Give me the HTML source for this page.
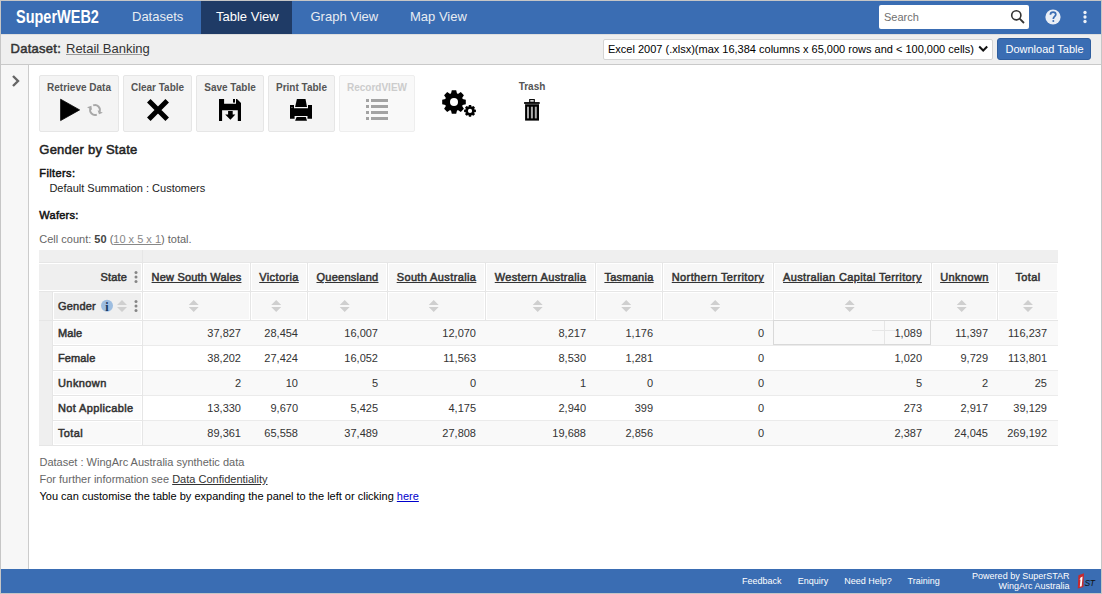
<!DOCTYPE html><html><head><meta charset="utf-8"><title>SuperWEB2 Table View</title><style>
html,body{margin:0;padding:0;background:#fff;}
body{width:1102px;height:594px;position:relative;overflow:hidden;font-family:"Liberation Sans",sans-serif;}
.t{position:absolute;white-space:nowrap;}
.b{position:absolute;}
svg{position:absolute;overflow:visible;}
u{text-decoration:underline;}
</style></head><body>
<div class="b" style="left:0px;top:0px;width:1102px;height:594px;background:#c6c6c6;"></div>
<div class="b" style="left:1px;top:1px;width:1100px;height:592px;background:#ffffff;"></div>
<div class="b" style="left:1px;top:1px;width:1100px;height:33px;background:#3a6db3;"></div>
<div class="t" style="left:16px;top:6px;font-size:18px;line-height:22px;font-weight:bold;color:#fff;transform:scaleX(0.805);transform-origin:0 0;">SuperWEB2</div>
<div class="b" style="left:201px;top:1px;width:91px;height:33px;background:#1f3b66;"></div>
<div class="t" style="left:132px;top:9.10px;font-size:13px;line-height:16px;color:#e8ecf2;">Datasets</div>
<div class="t" style="left:216px;top:9.10px;font-size:13px;line-height:16px;color:#ffffff;">Table View</div>
<div class="t" style="left:310.5px;top:9.10px;font-size:13px;line-height:16px;color:#e8ecf2;">Graph View</div>
<div class="t" style="left:410px;top:9.10px;font-size:13px;line-height:16px;color:#e8ecf2;">Map View</div>
<div class="b" style="left:879px;top:5px;width:150px;height:24px;background:#fff;border-radius:2px;"></div>
<div class="t" style="left:884px;top:10.19px;font-size:11px;line-height:14px;color:#707070;">Search</div>
<svg style="left:1010px;top:9px" width="16" height="16" viewBox="0 0 16 16"><circle cx="6.3" cy="6.3" r="4.6" fill="none" stroke="#333" stroke-width="1.6"/><line x1="9.6" y1="9.6" x2="14" y2="14" stroke="#333" stroke-width="1.8"/></svg>
<svg style="left:0;top:0" width="1102" height="40" viewBox="0 0 1102 40"><circle cx="1053" cy="17" r="7.6" fill="#e9eef6"/><path d="M1050.4,14.8 C1050.4,13.1 1051.5,12.2 1053.1,12.2 C1054.7,12.2 1055.8,13.2 1055.8,14.6 C1055.8,16.4 1053.3,16.6 1053.3,18.9" fill="none" stroke="#3a6db3" stroke-width="1.7"/><circle cx="1053.3" cy="21" r="1" fill="#3a6db3"/><circle cx="1085" cy="12.5" r="1.65" fill="#eef2f8"/><circle cx="1085" cy="17" r="1.65" fill="#eef2f8"/><circle cx="1085" cy="21.5" r="1.65" fill="#eef2f8"/></svg>
<div class="b" style="left:1px;top:34px;width:1100px;height:30px;background:#efefef;"></div>
<div class="b" style="left:1px;top:34px;width:1100px;height:1px;background:#dedede;"></div>
<div class="b" style="left:1px;top:64px;width:1100px;height:1px;background:#c9c9c9;"></div>
<div class="t" style="left:10.5px;top:41.20px;font-size:13px;line-height:16px;color:#333;-webkit-text-stroke:0.50px #333;letter-spacing:0.265px;">Dataset:</div>
<div class="t" style="left:66px;top:41.20px;font-size:13px;line-height:16px;color:#333;"><span style="text-decoration:underline;text-decoration-color:#9a9a9a;">Retail Banking</span></div>
<div class="b" style="left:603px;top:39px;width:388px;height:19px;background:#fff;border:1px solid #d4d4d4;border-radius:2px;"></div>
<div class="t" style="left:608px;top:41.99px;font-size:11px;line-height:14px;color:#000;">Excel 2007 (.xlsx)(max 16,384 columns x 65,000 rows and &lt; 100,000 cells)</div>
<svg style="left:978px;top:45px" width="11" height="8" viewBox="0 0 11 8"><polyline points="1.2,1.5 5.2,5.5 9.2,1.5" fill="none" stroke="#111" stroke-width="2"/></svg>
<div class="b" style="left:997px;top:38px;width:92px;height:20px;background:#3a6db3;border:1px solid #2f5e9f;border-radius:3px;"></div>
<div class="t" style="left:1005.5px;top:42.09px;font-size:11px;line-height:14px;color:#fff;">Download Table</div>
<div class="b" style="left:1px;top:65px;width:27px;height:504px;background:#f7f7f7;"></div>
<div class="b" style="left:28px;top:65px;width:1px;height:504px;background:#cccccc;"></div>
<svg style="left:10px;top:74px" width="12" height="14" viewBox="0 0 12 14"><polyline points="3,2 8,7 3,12" fill="none" stroke="#666" stroke-width="2.4"/></svg>
<div class="b" style="left:39px;top:75px;width:78px;height:55px;background:#f4f4f4;border:1px solid #e6e6e6;border-radius:2px;"></div>
<div class="t" style="left:19.0px;width:120px;text-align:center;top:81.53px;font-size:10px;line-height:12px;color:#555555;font-weight:bold;">Retrieve Data</div>
<div class="b" style="left:123px;top:75px;width:67px;height:55px;background:#f4f4f4;border:1px solid #e6e6e6;border-radius:2px;"></div>
<div class="t" style="left:97.5px;width:120px;text-align:center;top:81.53px;font-size:10px;line-height:12px;color:#555555;font-weight:bold;">Clear Table</div>
<div class="b" style="left:196px;top:75px;width:66px;height:55px;background:#f4f4f4;border:1px solid #e6e6e6;border-radius:2px;"></div>
<div class="t" style="left:170.0px;width:120px;text-align:center;top:81.53px;font-size:10px;line-height:12px;color:#555555;font-weight:bold;">Save Table</div>
<div class="b" style="left:268px;top:75px;width:65px;height:55px;background:#f4f4f4;border:1px solid #e6e6e6;border-radius:2px;"></div>
<div class="t" style="left:241.5px;width:120px;text-align:center;top:81.53px;font-size:10px;line-height:12px;color:#555555;font-weight:bold;">Print Table</div>
<div class="b" style="left:339px;top:75px;width:74px;height:55px;background:#f9f9f9;border:1px solid #eeeeee;border-radius:2px;"></div>
<div class="t" style="left:317.0px;width:120px;text-align:center;top:81.53px;font-size:10px;line-height:12px;color:#cccccc;font-weight:bold;">RecordVIEW</div>
<div class="t" style="left:502.0px;width:60px;text-align:center;top:81.23px;font-size:10px;line-height:12px;color:#555555;font-weight:bold;">Trash</div>
<div class="t" style="left:39.3px;top:142.10px;font-size:13px;line-height:16px;color:#222;-webkit-text-stroke:0.50px #222;letter-spacing:0.235px;">Gender by State</div>
<div class="t" style="left:39.3px;top:166.19px;font-size:11px;line-height:14px;color:#111;-webkit-text-stroke:0.50px #111;letter-spacing:0.392px;">Filters:</div>
<div class="t" style="left:49.4px;top:180.69px;font-size:11px;line-height:14px;color:#222;">Default Summation : Customers</div>
<div class="t" style="left:39.3px;top:207.79px;font-size:11px;line-height:14px;color:#111;-webkit-text-stroke:0.50px #111;letter-spacing:0.263px;">Wafers:</div>
<div class="t" style="left:39.3px;top:231.99px;font-size:11px;line-height:14px;color:#666;">Cell count: <b style="color:#444">50</b> (<u style="color:#888">10 x 5 x 1</u>) total.</div>
<div class="b" style="left:39px;top:250px;width:1019px;height:196px;background:#e6e6e6;"></div>
<div class="b" style="left:39px;top:250px;width:103px;height:12px;background:#efefef;"></div>
<div class="b" style="left:143px;top:250px;width:915px;height:12px;background:#efefef;"></div>
<div class="b" style="left:39px;top:263px;width:103px;height:28px;background:#ffffff;"></div>
<div class="b" style="left:39px;top:264px;width:102px;height:26px;background:#efefef;"></div>
<div class="b" style="left:143px;top:263px;width:107px;height:28px;background:#ffffff;"></div>
<div class="b" style="left:144px;top:264px;width:105px;height:26px;background:#f7f7f7;"></div>
<div class="b" style="left:143px;top:292px;width:107px;height:28px;background:#ffffff;"></div>
<div class="b" style="left:144px;top:293px;width:105px;height:26px;background:#f7f7f7;"></div>
<div class="b" style="left:251px;top:263px;width:56px;height:28px;background:#ffffff;"></div>
<div class="b" style="left:252px;top:264px;width:54px;height:26px;background:#f7f7f7;"></div>
<div class="b" style="left:251px;top:292px;width:56px;height:28px;background:#ffffff;"></div>
<div class="b" style="left:252px;top:293px;width:54px;height:26px;background:#f7f7f7;"></div>
<div class="b" style="left:308px;top:263px;width:79px;height:28px;background:#ffffff;"></div>
<div class="b" style="left:309px;top:264px;width:77px;height:26px;background:#f7f7f7;"></div>
<div class="b" style="left:308px;top:292px;width:79px;height:28px;background:#ffffff;"></div>
<div class="b" style="left:309px;top:293px;width:77px;height:26px;background:#f7f7f7;"></div>
<div class="b" style="left:388px;top:263px;width:97px;height:28px;background:#ffffff;"></div>
<div class="b" style="left:389px;top:264px;width:95px;height:26px;background:#f7f7f7;"></div>
<div class="b" style="left:388px;top:292px;width:97px;height:28px;background:#ffffff;"></div>
<div class="b" style="left:389px;top:293px;width:95px;height:26px;background:#f7f7f7;"></div>
<div class="b" style="left:486px;top:263px;width:109px;height:28px;background:#ffffff;"></div>
<div class="b" style="left:487px;top:264px;width:107px;height:26px;background:#f7f7f7;"></div>
<div class="b" style="left:486px;top:292px;width:109px;height:28px;background:#ffffff;"></div>
<div class="b" style="left:487px;top:293px;width:107px;height:26px;background:#f7f7f7;"></div>
<div class="b" style="left:596px;top:263px;width:66px;height:28px;background:#ffffff;"></div>
<div class="b" style="left:597px;top:264px;width:64px;height:26px;background:#f7f7f7;"></div>
<div class="b" style="left:596px;top:292px;width:66px;height:28px;background:#ffffff;"></div>
<div class="b" style="left:597px;top:293px;width:64px;height:26px;background:#f7f7f7;"></div>
<div class="b" style="left:663px;top:263px;width:110px;height:28px;background:#ffffff;"></div>
<div class="b" style="left:664px;top:264px;width:108px;height:26px;background:#f7f7f7;"></div>
<div class="b" style="left:663px;top:292px;width:110px;height:28px;background:#ffffff;"></div>
<div class="b" style="left:664px;top:293px;width:108px;height:26px;background:#f7f7f7;"></div>
<div class="b" style="left:774px;top:263px;width:157px;height:28px;background:#ffffff;"></div>
<div class="b" style="left:775px;top:264px;width:155px;height:26px;background:#f7f7f7;"></div>
<div class="b" style="left:774px;top:292px;width:157px;height:28px;background:#ffffff;"></div>
<div class="b" style="left:775px;top:293px;width:155px;height:26px;background:#f7f7f7;"></div>
<div class="b" style="left:932px;top:263px;width:65px;height:28px;background:#ffffff;"></div>
<div class="b" style="left:933px;top:264px;width:63px;height:26px;background:#f7f7f7;"></div>
<div class="b" style="left:932px;top:292px;width:65px;height:28px;background:#ffffff;"></div>
<div class="b" style="left:933px;top:293px;width:63px;height:26px;background:#f7f7f7;"></div>
<div class="b" style="left:998px;top:263px;width:60px;height:28px;background:#ffffff;"></div>
<div class="b" style="left:999px;top:264px;width:58px;height:26px;background:#f7f7f7;"></div>
<div class="b" style="left:998px;top:292px;width:60px;height:28px;background:#ffffff;"></div>
<div class="b" style="left:999px;top:293px;width:58px;height:26px;background:#f7f7f7;"></div>
<div class="b" style="left:39px;top:292px;width:13px;height:28px;background:#efefef;"></div>
<div class="b" style="left:53px;top:292px;width:89px;height:28px;background:#ffffff;"></div>
<div class="b" style="left:54px;top:293px;width:87px;height:26px;background:#efefef;"></div>
<div class="b" style="left:39px;top:321px;width:13px;height:124px;background:#efefef;"></div>
<div class="b" style="left:53px;top:321px;width:89px;height:24px;background:#ffffff;"></div>
<div class="b" style="left:54px;top:322px;width:87px;height:22px;background:#f9f9f9;"></div>
<div class="b" style="left:143px;top:321px;width:915px;height:24px;background:#f9f9f9;"></div>
<div class="b" style="left:143px;top:345px;width:915px;height:1px;background:#ebebeb;"></div>
<div class="b" style="left:53px;top:346px;width:89px;height:24px;background:#ffffff;"></div>
<div class="b" style="left:54px;top:347px;width:87px;height:22px;background:#fcfcfc;"></div>
<div class="b" style="left:143px;top:346px;width:915px;height:24px;background:#ffffff;"></div>
<div class="b" style="left:143px;top:370px;width:915px;height:1px;background:#ebebeb;"></div>
<div class="b" style="left:53px;top:371px;width:89px;height:24px;background:#ffffff;"></div>
<div class="b" style="left:54px;top:372px;width:87px;height:22px;background:#f9f9f9;"></div>
<div class="b" style="left:143px;top:371px;width:915px;height:24px;background:#f9f9f9;"></div>
<div class="b" style="left:143px;top:395px;width:915px;height:1px;background:#ebebeb;"></div>
<div class="b" style="left:53px;top:396px;width:89px;height:24px;background:#ffffff;"></div>
<div class="b" style="left:54px;top:397px;width:87px;height:22px;background:#fcfcfc;"></div>
<div class="b" style="left:143px;top:396px;width:915px;height:24px;background:#ffffff;"></div>
<div class="b" style="left:143px;top:420px;width:915px;height:1px;background:#ebebeb;"></div>
<div class="b" style="left:53px;top:421px;width:89px;height:24px;background:#ffffff;"></div>
<div class="b" style="left:54px;top:422px;width:87px;height:22px;background:#f9f9f9;"></div>
<div class="b" style="left:143px;top:421px;width:915px;height:24px;background:#f9f9f9;"></div>
<div class="b" style="left:143px;top:445px;width:915px;height:1px;background:#ebebeb;"></div>
<div class="b" style="left:39px;top:445px;width:1019px;height:1px;background:#e6e6e6;"></div>
<div class="t" style="left:47px;width:80px;text-align:right;top:270.49px;font-size:11px;line-height:14px;color:#333;-webkit-text-stroke:0.50px #333;letter-spacing:0.157px;">State</div>
<svg style="left:0;top:0" width="1102" height="594"></svg>
<div class="t" style="left:123.5px;width:146px;text-align:center;top:270.49px;font-size:11px;line-height:14px;color:#333;-webkit-text-stroke:0.50px #333;letter-spacing:0.192px;"><u>New South Wales</u></div>
<div class="t" style="left:231.5px;width:95px;text-align:center;top:270.49px;font-size:11px;line-height:14px;color:#333;-webkit-text-stroke:0.50px #333;letter-spacing:0.386px;"><u>Victoria</u></div>
<div class="t" style="left:288.5px;width:118px;text-align:center;top:270.49px;font-size:11px;line-height:14px;color:#333;-webkit-text-stroke:0.50px #333;letter-spacing:0.268px;"><u>Queensland</u></div>
<div class="t" style="left:368.5px;width:136px;text-align:center;top:270.49px;font-size:11px;line-height:14px;color:#333;-webkit-text-stroke:0.50px #333;letter-spacing:0.376px;"><u>South Australia</u></div>
<div class="t" style="left:466.5px;width:148px;text-align:center;top:270.49px;font-size:11px;line-height:14px;color:#333;-webkit-text-stroke:0.50px #333;letter-spacing:0.325px;"><u>Western Australia</u></div>
<div class="t" style="left:576.5px;width:105px;text-align:center;top:270.49px;font-size:11px;line-height:14px;color:#333;-webkit-text-stroke:0.50px #333;letter-spacing:0.266px;"><u>Tasmania</u></div>
<div class="t" style="left:643.5px;width:149px;text-align:center;top:270.49px;font-size:11px;line-height:14px;color:#333;-webkit-text-stroke:0.50px #333;letter-spacing:0.397px;"><u>Northern Territory</u></div>
<div class="t" style="left:754.5px;width:196px;text-align:center;top:270.49px;font-size:11px;line-height:14px;color:#333;-webkit-text-stroke:0.50px #333;letter-spacing:0.361px;"><u>Australian Capital Territory</u></div>
<div class="t" style="left:912.5px;width:104px;text-align:center;top:270.49px;font-size:11px;line-height:14px;color:#333;-webkit-text-stroke:0.50px #333;letter-spacing:0.412px;"><u>Unknown</u></div>
<div class="t" style="left:978.5px;width:99px;text-align:center;top:270.49px;font-size:11px;line-height:14px;color:#333;-webkit-text-stroke:0.50px #333;letter-spacing:0.367px;">Total</div>
<div class="t" style="left:58px;top:298.69px;font-size:11px;line-height:14px;color:#333;-webkit-text-stroke:0.50px #333;letter-spacing:0.206px;">Gender</div>
<div class="t" style="left:58px;top:326.19px;font-size:11px;line-height:14px;color:#333;-webkit-text-stroke:0.50px #333;letter-spacing:0.064px;">Male</div>
<div class="t" style="left:141px;width:100px;text-align:right;top:326.19px;font-size:11px;line-height:14px;color:#333;">37,827</div>
<div class="t" style="left:198px;width:100px;text-align:right;top:326.19px;font-size:11px;line-height:14px;color:#333;">28,454</div>
<div class="t" style="left:278px;width:100px;text-align:right;top:326.19px;font-size:11px;line-height:14px;color:#333;">16,007</div>
<div class="t" style="left:376px;width:100px;text-align:right;top:326.19px;font-size:11px;line-height:14px;color:#333;">12,070</div>
<div class="t" style="left:486px;width:100px;text-align:right;top:326.19px;font-size:11px;line-height:14px;color:#333;">8,217</div>
<div class="t" style="left:553px;width:100px;text-align:right;top:326.19px;font-size:11px;line-height:14px;color:#333;">1,176</div>
<div class="t" style="left:664px;width:100px;text-align:right;top:326.19px;font-size:11px;line-height:14px;color:#333;">0</div>
<div class="t" style="left:822px;width:100px;text-align:right;top:326.19px;font-size:11px;line-height:14px;color:#333;">1,089</div>
<div class="t" style="left:888px;width:100px;text-align:right;top:326.19px;font-size:11px;line-height:14px;color:#333;">11,397</div>
<div class="t" style="left:947px;width:100px;text-align:right;top:326.19px;font-size:11px;line-height:14px;color:#333;">116,237</div>
<div class="t" style="left:58px;top:351.19px;font-size:11px;line-height:14px;color:#333;-webkit-text-stroke:0.50px #333;letter-spacing:0.113px;">Female</div>
<div class="t" style="left:141px;width:100px;text-align:right;top:351.19px;font-size:11px;line-height:14px;color:#333;">38,202</div>
<div class="t" style="left:198px;width:100px;text-align:right;top:351.19px;font-size:11px;line-height:14px;color:#333;">27,424</div>
<div class="t" style="left:278px;width:100px;text-align:right;top:351.19px;font-size:11px;line-height:14px;color:#333;">16,052</div>
<div class="t" style="left:376px;width:100px;text-align:right;top:351.19px;font-size:11px;line-height:14px;color:#333;">11,563</div>
<div class="t" style="left:486px;width:100px;text-align:right;top:351.19px;font-size:11px;line-height:14px;color:#333;">8,530</div>
<div class="t" style="left:553px;width:100px;text-align:right;top:351.19px;font-size:11px;line-height:14px;color:#333;">1,281</div>
<div class="t" style="left:664px;width:100px;text-align:right;top:351.19px;font-size:11px;line-height:14px;color:#333;">0</div>
<div class="t" style="left:822px;width:100px;text-align:right;top:351.19px;font-size:11px;line-height:14px;color:#333;">1,020</div>
<div class="t" style="left:888px;width:100px;text-align:right;top:351.19px;font-size:11px;line-height:14px;color:#333;">9,729</div>
<div class="t" style="left:947px;width:100px;text-align:right;top:351.19px;font-size:11px;line-height:14px;color:#333;">113,801</div>
<div class="t" style="left:58px;top:376.19px;font-size:11px;line-height:14px;color:#333;-webkit-text-stroke:0.50px #333;letter-spacing:0.412px;">Unknown</div>
<div class="t" style="left:141px;width:100px;text-align:right;top:376.19px;font-size:11px;line-height:14px;color:#333;">2</div>
<div class="t" style="left:198px;width:100px;text-align:right;top:376.19px;font-size:11px;line-height:14px;color:#333;">10</div>
<div class="t" style="left:278px;width:100px;text-align:right;top:376.19px;font-size:11px;line-height:14px;color:#333;">5</div>
<div class="t" style="left:376px;width:100px;text-align:right;top:376.19px;font-size:11px;line-height:14px;color:#333;">0</div>
<div class="t" style="left:486px;width:100px;text-align:right;top:376.19px;font-size:11px;line-height:14px;color:#333;">1</div>
<div class="t" style="left:553px;width:100px;text-align:right;top:376.19px;font-size:11px;line-height:14px;color:#333;">0</div>
<div class="t" style="left:664px;width:100px;text-align:right;top:376.19px;font-size:11px;line-height:14px;color:#333;">0</div>
<div class="t" style="left:822px;width:100px;text-align:right;top:376.19px;font-size:11px;line-height:14px;color:#333;">5</div>
<div class="t" style="left:888px;width:100px;text-align:right;top:376.19px;font-size:11px;line-height:14px;color:#333;">2</div>
<div class="t" style="left:947px;width:100px;text-align:right;top:376.19px;font-size:11px;line-height:14px;color:#333;">25</div>
<div class="t" style="left:58px;top:401.19px;font-size:11px;line-height:14px;color:#333;-webkit-text-stroke:0.50px #333;letter-spacing:0.365px;">Not Applicable</div>
<div class="t" style="left:141px;width:100px;text-align:right;top:401.19px;font-size:11px;line-height:14px;color:#333;">13,330</div>
<div class="t" style="left:198px;width:100px;text-align:right;top:401.19px;font-size:11px;line-height:14px;color:#333;">9,670</div>
<div class="t" style="left:278px;width:100px;text-align:right;top:401.19px;font-size:11px;line-height:14px;color:#333;">5,425</div>
<div class="t" style="left:376px;width:100px;text-align:right;top:401.19px;font-size:11px;line-height:14px;color:#333;">4,175</div>
<div class="t" style="left:486px;width:100px;text-align:right;top:401.19px;font-size:11px;line-height:14px;color:#333;">2,940</div>
<div class="t" style="left:553px;width:100px;text-align:right;top:401.19px;font-size:11px;line-height:14px;color:#333;">399</div>
<div class="t" style="left:664px;width:100px;text-align:right;top:401.19px;font-size:11px;line-height:14px;color:#333;">0</div>
<div class="t" style="left:822px;width:100px;text-align:right;top:401.19px;font-size:11px;line-height:14px;color:#333;">273</div>
<div class="t" style="left:888px;width:100px;text-align:right;top:401.19px;font-size:11px;line-height:14px;color:#333;">2,917</div>
<div class="t" style="left:947px;width:100px;text-align:right;top:401.19px;font-size:11px;line-height:14px;color:#333;">39,129</div>
<div class="t" style="left:58px;top:426.19px;font-size:11px;line-height:14px;color:#333;-webkit-text-stroke:0.50px #333;letter-spacing:0.367px;">Total</div>
<div class="t" style="left:141px;width:100px;text-align:right;top:426.19px;font-size:11px;line-height:14px;color:#333;">89,361</div>
<div class="t" style="left:198px;width:100px;text-align:right;top:426.19px;font-size:11px;line-height:14px;color:#333;">65,558</div>
<div class="t" style="left:278px;width:100px;text-align:right;top:426.19px;font-size:11px;line-height:14px;color:#333;">37,489</div>
<div class="t" style="left:376px;width:100px;text-align:right;top:426.19px;font-size:11px;line-height:14px;color:#333;">27,808</div>
<div class="t" style="left:486px;width:100px;text-align:right;top:426.19px;font-size:11px;line-height:14px;color:#333;">19,688</div>
<div class="t" style="left:553px;width:100px;text-align:right;top:426.19px;font-size:11px;line-height:14px;color:#333;">2,856</div>
<div class="t" style="left:664px;width:100px;text-align:right;top:426.19px;font-size:11px;line-height:14px;color:#333;">0</div>
<div class="t" style="left:822px;width:100px;text-align:right;top:426.19px;font-size:11px;line-height:14px;color:#333;">2,387</div>
<div class="t" style="left:888px;width:100px;text-align:right;top:426.19px;font-size:11px;line-height:14px;color:#333;">24,045</div>
<div class="t" style="left:947px;width:100px;text-align:right;top:426.19px;font-size:11px;line-height:14px;color:#333;">269,192</div>
<div class="b" style="left:773px;top:320px;width:156px;height:23px;border:1px solid #d9d9d9;"></div>
<div class="t" style="left:39.5px;top:454.89px;font-size:11px;line-height:14px;color:#666;">Dataset : WingArc Australia synthetic data</div>
<div class="t" style="left:39.5px;top:472.09px;font-size:11px;line-height:14px;color:#666;">For further information see <u style="color:#333">Data Confidentiality</u></div>
<div class="t" style="left:39.5px;top:488.99px;font-size:11px;line-height:14px;color:#000;">You can customise the table by expanding the panel to the left or clicking <u style="color:#0000cc">here</u></div>
<div class="b" style="left:1px;top:569px;width:1100px;height:24px;background:#3a6db3;"></div>
<div class="t" style="left:742px;top:575.58px;font-size:9px;line-height:11px;color:#fff;">Feedback</div>
<div class="t" style="left:797.8px;top:575.58px;font-size:9px;line-height:11px;color:#fff;">Enquiry</div>
<div class="t" style="left:844.2px;top:575.58px;font-size:9px;line-height:11px;color:#fff;">Need Help?</div>
<div class="t" style="left:907.5px;top:575.58px;font-size:9px;line-height:11px;color:#fff;">Training</div>
<div class="t" style="left:869.5px;width:200px;text-align:right;top:570.88px;font-size:9px;line-height:10px;color:#fff;">Powered by SuperSTAR</div>
<div class="t" style="left:869.5px;width:200px;text-align:right;top:580.58px;font-size:9px;line-height:10px;color:#fff;">WingArc Australia</div>
<svg style="left:0;top:0;pointer-events:none" width="1102" height="594" viewBox="0 0 1102 594"><path d="M60.6,99.2 L60.6,120.6 L79.6,109.9 Z" fill="#000" stroke="#000" stroke-width="0.8" stroke-linejoin="round"/><path d="M93.16,105.46 A4.9,4.9 0 0 1 99.54,111.84" fill="none" stroke="#a8a8a8" stroke-width="1.9"/><path d="M96.84,114.54 A4.9,4.9 0 0 1 90.46,108.16" fill="none" stroke="#a8a8a8" stroke-width="1.9"/><path d="M97.6,110.2 L102.8,112.7 L99.0,114.3 Z" fill="#a8a8a8"/><path d="M91.4,105.7 L87.0,107.3 L91.9,109.9 Z" fill="#a8a8a8"/><path d="M148.8,100.8 L167.2,119.2 M167.2,100.8 L148.8,119.2" stroke="#000" stroke-width="5" stroke-linecap="butt"/><path d="M219,99 H224.1 V103.8 H236 V99 H237 L241,103 V121 H237.8 V110.2 H222.1 V121 H219 Z" fill="#000"/><rect x="233" y="99" width="2" height="3.6" fill="#000"/><path d="M228.1,111 H232.7 V114.4 H235.4 L230.4,119.8 L225.2,114.4 H228.1 Z" fill="#000"/><path d="M290,105 H294 V108.2 H308 V105 H312 V118.7 H307.5 V116 H294.6 V118.7 H290 Z" fill="#000"/><rect x="291.3" y="107" width="1.2" height="1" fill="#777"/><path d="M296.9,99 L305.5,99 L307,107.1 L295.1,107.1 Z" fill="#000"/><path d="M296.6,117 L305.8,117 L307,120.7 L295.1,120.7 Z" fill="#000"/><rect x="366" y="99" width="3" height="3" fill="#a3a3a3"/><rect x="371" y="99" width="17" height="3" fill="#a3a3a3"/><rect x="366" y="105" width="3" height="3" fill="#a3a3a3"/><rect x="371" y="105" width="17" height="3" fill="#a3a3a3"/><rect x="366" y="111" width="3" height="3" fill="#a3a3a3"/><rect x="371" y="111" width="17" height="3" fill="#a3a3a3"/><rect x="366" y="117" width="3" height="3" fill="#a3a3a3"/><rect x="371" y="117" width="17" height="3" fill="#a3a3a3"/><path d="M462.49,99.00 L465.80,99.80 L465.80,104.20 L462.49,105.00 L462.12,105.88 L463.90,108.79 L460.79,111.90 L457.88,110.12 L457.00,110.49 L456.20,113.80 L451.80,113.80 L451.00,110.49 L450.12,110.12 L447.21,111.90 L444.10,108.79 L445.88,105.88 L445.51,105.00 L442.20,104.20 L442.20,99.80 L445.51,99.00 L445.88,98.12 L444.10,95.21 L447.21,92.10 L450.12,93.88 L451.00,93.51 L451.80,90.20 L456.20,90.20 L457.00,93.51 L457.88,93.88 L460.79,92.10 L463.90,95.21 L462.12,98.12Z" fill="#000"/><circle cx="454" cy="102" r="9.0" fill="#000"/><circle cx="454" cy="102" r="4.0" fill="#fff"/><path d="M473.17,109.00 L475.90,109.80 L475.90,112.00 L473.17,112.80 L473.59,111.80 L474.95,114.29 L473.39,115.85 L470.90,114.49 L471.90,114.07 L471.10,116.80 L468.90,116.80 L468.10,114.07 L469.10,114.49 L466.61,115.85 L465.05,114.29 L466.41,111.80 L466.83,112.80 L464.10,112.00 L464.10,109.80 L466.83,109.00 L466.41,110.00 L465.05,107.51 L466.61,105.95 L469.10,107.31 L468.10,107.73 L468.90,105.00 L471.10,105.00 L471.90,107.73 L470.90,107.31 L473.39,105.95 L474.95,107.51 L473.59,110.00Z" fill="#000"/><circle cx="470" cy="110.9" r="3.7" fill="#000"/><circle cx="470" cy="110.9" r="2.1" fill="#fff"/><rect x="529.7" y="99.6" width="4.6" height="2.6" fill="none" stroke="#000" stroke-width="1.1"/><rect x="524.1" y="102.1" width="15.6" height="1.8" fill="#000"/><rect x="525.1" y="103.9" width="13.9" height="1.2" fill="#666"/><rect x="525.1" y="104.6" width="13.9" height="16" fill="#000"/><rect x="527" y="106.7" width="2" height="11.7" fill="#aaa"/><rect x="530.9" y="106.7" width="2" height="11.7" fill="#aaa"/><rect x="534.8" y="106.7" width="2" height="11.7" fill="#aaa"/><path d="M188.7,305 L198.7,305 L193.7,300 Z M188.7,307 L198.7,307 L193.7,312 Z" fill="#cfcfcf"/><path d="M271.2,305 L281.2,305 L276.2,300 Z M271.2,307 L281.2,307 L276.2,312 Z" fill="#cfcfcf"/><path d="M339.7,305 L349.7,305 L344.7,300 Z M339.7,307 L349.7,307 L344.7,312 Z" fill="#cfcfcf"/><path d="M428.7,305 L438.7,305 L433.7,300 Z M428.7,307 L438.7,307 L433.7,312 Z" fill="#cfcfcf"/><path d="M532.7,305 L542.7,305 L537.7,300 Z M532.7,307 L542.7,307 L537.7,312 Z" fill="#cfcfcf"/><path d="M621.2,305 L631.2,305 L626.2,300 Z M621.2,307 L631.2,307 L626.2,312 Z" fill="#cfcfcf"/><path d="M710.2,305 L720.2,305 L715.2,300 Z M710.2,307 L720.2,307 L715.2,312 Z" fill="#cfcfcf"/><path d="M844.7,305 L854.7,305 L849.7,300 Z M844.7,307 L854.7,307 L849.7,312 Z" fill="#cfcfcf"/><path d="M956.7,305 L966.7,305 L961.7,300 Z M956.7,307 L966.7,307 L961.7,312 Z" fill="#cfcfcf"/><path d="M1023.0,305 L1033.0,305 L1028.0,300 Z M1023.0,307 L1033.0,307 L1028.0,312 Z" fill="#cfcfcf"/><circle cx="107" cy="305.7" r="6" fill="#9dbde0"/><text x="107" y="310.6" text-anchor="middle" font-family="Liberation Serif" font-weight="bold" font-size="12" fill="#17375e">i</text><path d="M117,305 L127,305 L122,300 Z M117,307 L127,307 L122,312 Z" fill="#cfcfcf"/><circle cx="136" cy="272.5" r="1.5" fill="#858585"/><circle cx="136" cy="277" r="1.5" fill="#858585"/><circle cx="136" cy="281.6" r="1.5" fill="#858585"/><circle cx="136" cy="301.5" r="1.5" fill="#858585"/><circle cx="136" cy="306" r="1.5" fill="#858585"/><circle cx="136" cy="310.5" r="1.5" fill="#858585"/><path d="M884.5,321 V344 M872,330.5 H896" stroke="#e6e6e6" stroke-width="1"/><path d="M1078.4,575.2 L1084,573.2 L1083.4,587 L1077.8,588.4 Z" fill="#c62a2f"/><path d="M1080.6,577.6 L1082.6,576.6 L1081.7,586.3 L1079.8,586.8 L1080.5,579.4 L1079.6,579.8 Z" fill="#fff"/><text x="1084.4" y="585.6" font-family="Liberation Sans" font-style="italic" font-size="8.5" letter-spacing="-0.4" fill="#111">ST</text></svg>
</body></html>
